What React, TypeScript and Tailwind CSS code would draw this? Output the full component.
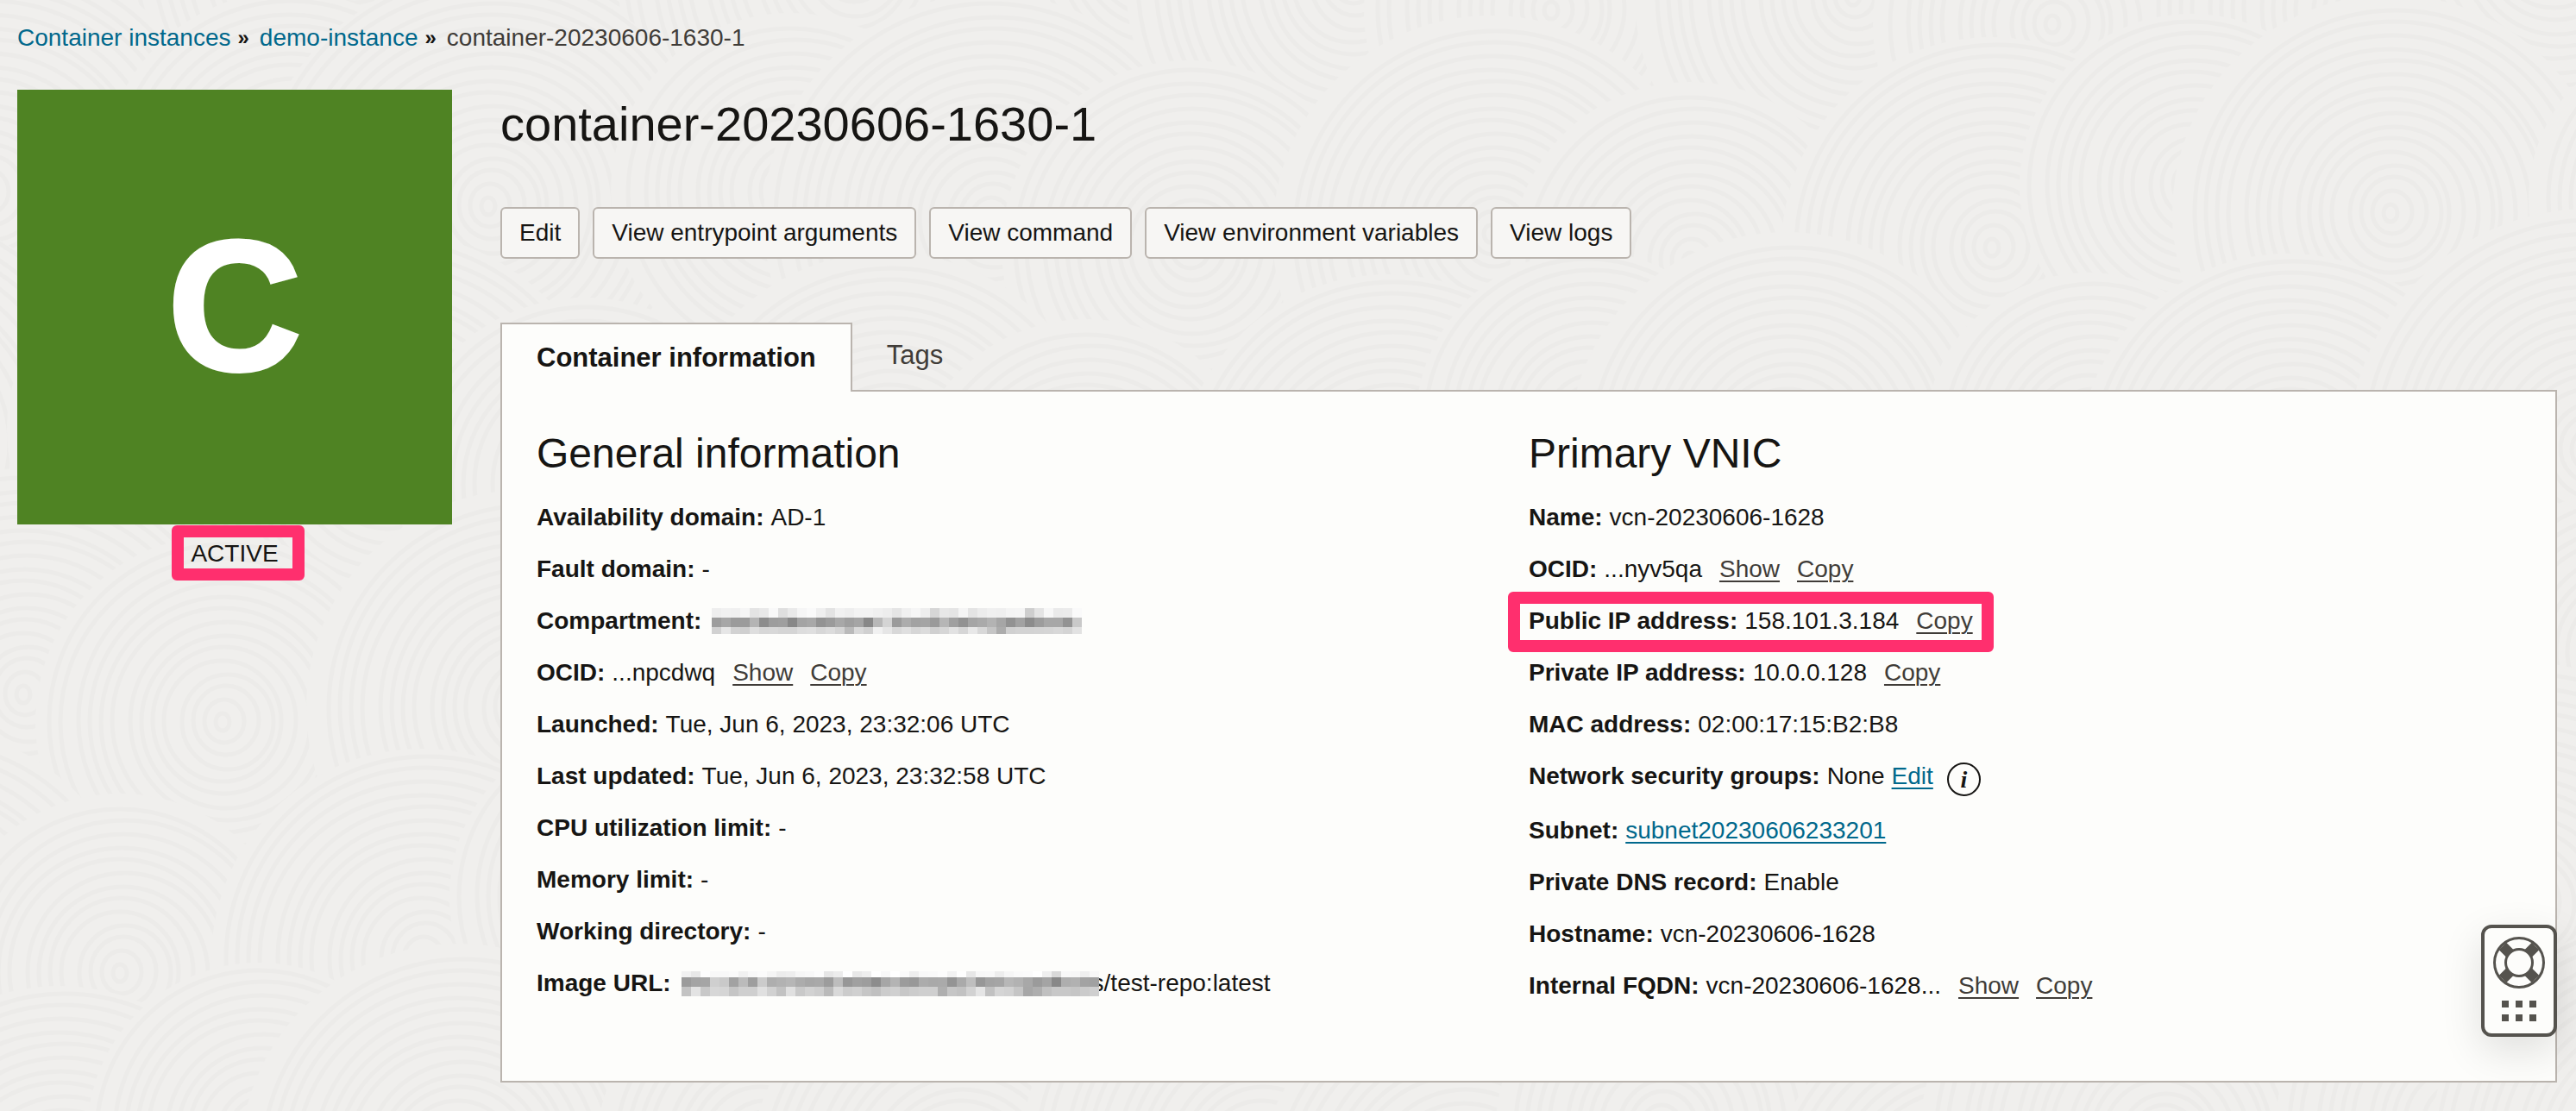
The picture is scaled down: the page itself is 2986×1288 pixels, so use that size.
import type { ReactNode } from "react";

const DISCS: [number, number, number][] = [];
for (let row = 0; row < 6; row++) {
  for (let col = 0; col < 12; col++) {
    const n = (row * 37 + col * 61) % 17;
    DISCS.push([
      -120 + col * 280 + (row % 2) * 140 + (n - 8) * 7,
      -20 + row * 275 + ((n * 5) % 13) * 8 - 48,
      190 + ((n * 7) % 11) * 9,
    ]);
  }
}

function Backdrop() {
  return (
    <svg
      aria-hidden="true"
      className="pointer-events-none absolute inset-0 -z-10 h-full w-full"
      viewBox="0 0 2986 1288"
      preserveAspectRatio="xMidYMid slice"
    >
      {DISCS.map(([x, y, r], i) => (
        <g key={i} fill="none" stroke="#ecebe9" strokeWidth="5">
          <circle cx={x} cy={y} r={r} fill="#f0efed" stroke="none" />
          {Array.from({ length: Math.floor(r / 15) }, (_, k) => (
            <ellipse key={k} cx={x + (k % 4) * 2} cy={y - (k % 3)} rx={8 + k * 15} ry={10 + k * 15} />
          ))}
        </g>
      ))}
    </svg>
  );
}

const COMPARTMENT_MASK = [
  "ee f1 f0 f6 e4 e9 f9 df ea f6 fa ef e3 f1 ee f3 f3 f0 ed e5 f0 f6 ee d6 e7 e5 f5 e4 ec f0 ef f4 f5 ce e4 f7 ea eb fa",
  "9d a7 9b 9b b4 8d 9d 9f 88 a4 a8 93 9b a8 9f a5 88 b8 d4 9b ac a2 a5 9a b6 a0 92 a5 aa b3 a6 92 a2 8c 9c a7 a7 93 c9",
  "d1 e6 d2 cf de d7 d8 d5 d5 dd df d7 dc d4 ba d9 d0 f1 e6 d8 df d6 dc d0 d6 e2 d6 e8 d8 c5 ac d0 d3 d3 d4 d5 d8 d4 e2",
];
const IMAGE_MASK = [
  "f1 e8 fd f8 f8 fa f1 f8 fb f5 ec ee f6 f8 fc e6 ec ff e8 ee ff f8 ff fa ee f8 f9 fc f2 fe e7 f7 f8 ed f6 fa fb ff ef d9 f8 f7 ef f8",
  "9b a4 a5 cf c9 a2 bb 9e cb ae b2 b6 ac a7 a9 9c bd 97 a0 9d 8d a6 b4 9c 98 ac a9 aa 94 aa be 97 a3 a5 b7 b2 a8 9b a4 88 ae b1 a3 a1",
  "c3 e3 c8 d7 d5 c5 cf cf e0 d1 c2 e0 c9 d2 cd ba d9 cc d0 c6 c0 cc d0 c7 cc cf cf af c6 c2 d2 e5 c1 d5 d2 c5 a7 ae c0 c8 c8 c5 cb cf",
];

function Redacted({ rows, label, heights }: { rows: string[]; label: string; heights: number[] }) {
  const columns = rows[0].split(" ").length;
  const total = heights[0] + heights[1] + heights[2];
  return (
    <svg
      role="img"
      aria-label={label}
      width={columns * 11}
      height={total}
      viewBox={`0 0 ${columns * 11} ${total}`}
      shapeRendering="crispEdges"
      className="shrink-0"
    >
      {rows.map((row, r) =>
        row
          .split(" ")
          .map((v, c) => (
            <rect
              key={`${r}-${c}`}
              x={c * 11}
              y={heights.slice(0, r).reduce((a, b) => a + b, 0)}
              width="11"
              height={heights[r]}
              fill={`#${v}${v}${v}`}
            />
          )),
      )}
    </svg>
  );
}

function Row({ label, children, marked }: { label: string; children: ReactNode; marked?: boolean }) {
  return (
    <div className="relative flex w-fit items-start gap-2 whitespace-nowrap">
      <dt className="font-bold">{label}:</dt>
      <dd className="flex items-start">{children}</dd>
      {marked && (
        <div className="pointer-events-none absolute -inset-x-6 -top-3.5 -bottom-4 rounded-md border-14 border-[#ff2f6e]" />
      )}
    </div>
  );
}

function Action({ children }: { children: ReactNode }) {
  return (
    <button type="button" className="ml-5 text-[#403c38] underline decoration-2 underline-offset-4">
      {children}
    </button>
  );
}

function ToolButton({ children }: { children: ReactNode }) {
  return (
    <button type="button" className="h-15 rounded-md border-2 border-[#bab4ae] bg-[#f7f6f4] px-5">
      {children}
    </button>
  );
}

function InfoIcon() {
  return (
    <button
      type="button"
      aria-label="About network security groups"
      className="mt-1 ml-4 flex size-[39px] items-center justify-center rounded-full border-2 border-[#161513] font-['Liberation_Serif',serif] text-[28px] leading-none font-bold italic"
    >
      i
    </button>
  );
}

function HelpWidget() {
  return (
    <button
      type="button"
      aria-label="Help"
      className="absolute -right-0.5 bottom-[51px] flex h-[130px] w-[88px] flex-col items-center rounded-xl border-4 border-[#55534e] bg-[#fdfdfb] pt-2.5 shadow-[0_16px_48px_rgba(0,0,0,0.12)]"
    >
      <svg width="60" height="60" viewBox="0 0 60 60" fill="none" stroke="#55534e">
        <circle cx="30" cy="30" r="28.500" strokeWidth="3" />
        <circle cx="30" cy="30" r="15.500" strokeWidth="3" />
        <path d="M19 19l-8-8M41 19l8-8M19 41l-8 8M41 41l8 8" strokeWidth="12" />
      </svg>
      <svg className="mt-3.5" width="40" height="24" viewBox="0 0 40 24" fill="#55534e" shapeRendering="crispEdges">
        {[0, 16, 32].map((x) => (
          <g key={x}>
            <rect x={x} y="0" width="8" height="8" />
            <rect x={x} y="16" width="8" height="8" />
          </g>
        ))}
      </svg>
    </button>
  );
}

export default function App() {
  return (
    <div className="relative isolate min-h-screen bg-[#f0efed] pt-6 pr-[22px] pb-8 pl-5 font-['Liberation_Sans',Arial,sans-serif] text-[28px] leading-10 text-[#161513]">
      <Backdrop />
      <nav aria-label="Breadcrumb" className="flex items-center">
        <a href="#instances" className="text-[#00688c]">Container instances</a>
        <span className="mr-3 ml-2 text-[24px] font-bold">»</span>
        <a href="#demo" className="text-[#00688c]">demo-instance</a>
        <span className="mr-3 ml-2 text-[24px] font-bold">»</span>
        <span className="text-[#403c38]">container-20230606-1630-1</span>
      </nav>

      <div className="mt-10 flex gap-14">
        <aside className="flex w-[504px] shrink-0 flex-col items-center">
          <div className="flex h-[504px] w-full items-center justify-center bg-[#4f8323] pb-1 text-[216px] font-bold text-white [-webkit-text-stroke:4px_white]">
            C
          </div>
          <div className="relative mt-3.5">
            ACTIVE
            <div className="pointer-events-none absolute -top-[13px] -right-[30px] -bottom-[11px] -left-[22px] rounded-md border-14 border-[#ff2f6e]" />
          </div>
        </aside>

        <main className="min-w-0 flex-1">
          <h1 className="mt-2 text-[56px] leading-16">container-20230606-1630-1</h1>
          <div className="mt-16 flex gap-[15px]">
            <ToolButton>Edit</ToolButton>
            <ToolButton>View entrypoint arguments</ToolButton>
            <ToolButton>View command</ToolButton>
            <ToolButton>View environment variables</ToolButton>
            <ToolButton>View logs</ToolButton>
          </div>

          <div role="tablist" className="relative z-10 mt-[74px] -mb-0.5 flex items-start text-[31px]">
            <button
              type="button"
              role="tab"
              aria-selected="true"
              className="h-20 border-2 border-b-0 border-[#bab4ae] bg-[#fdfdfb] px-10 font-bold"
            >
              Container information
            </button>
            <button type="button" role="tab" aria-selected="false" className="h-19 px-10 text-[#403c38]">
              Tags
            </button>
          </div>

          <div className="relative border-2 border-[#bab4ae] bg-[#fdfdfb] px-10 pt-10 pb-[90px]">
            <div className="grid grid-cols-2">
              <section>
                <h2 className="mb-[22px] text-[48px] leading-16">General information</h2>
                <dl className="flex flex-col gap-5">
                  <Row label="Availability domain">AD-1</Row>
                  <Row label="Fault domain">-</Row>
                  <Row label="Compartment">
                    <span className="ml-1 flex h-10 items-center">
                      <Redacted rows={COMPARTMENT_MASK} heights={[11, 11, 8]} label="Redacted compartment" />
                    </span>
                  </Row>
                  <Row label="OCID">
                    ...npcdwq
                    <Action>Show</Action>
                    <Action>Copy</Action>
                  </Row>
                  <Row label="Launched">Tue, Jun 6, 2023, 23:32:06 UTC</Row>
                  <Row label="Last updated">Tue, Jun 6, 2023, 23:32:58 UTC</Row>
                  <Row label="CPU utilization limit">-</Row>
                  <Row label="Memory limit">-</Row>
                  <Row label="Working directory">-</Row>
                  <Row label="Image URL">
                    <span className="relative z-10 ml-1 flex h-10 items-center">
                      <Redacted rows={IMAGE_MASK} heights={[7, 11, 11]} label="Redacted registry path" />
                    </span>
                    <span className="-ml-2">s/test-repo:latest</span>
                  </Row>
                </dl>
              </section>

              <section>
                <h2 className="mb-[22px] text-[48px] leading-16">Primary VNIC</h2>
                <dl className="flex flex-col gap-5">
                  <Row label="Name">vcn-20230606-1628</Row>
                  <Row label="OCID">
                    ...nyv5qa
                    <Action>Show</Action>
                    <Action>Copy</Action>
                  </Row>
                  <Row label="Public IP address" marked>
                    158.101.3.184
                    <Action>Copy</Action>
                  </Row>
                  <Row label="Private IP address">
                    10.0.0.128
                    <Action>Copy</Action>
                  </Row>
                  <Row label="MAC address">02:00:17:15:B2:B8</Row>
                  <Row label="Network security groups">
                    None
                    <a href="#groups" className="ml-2 text-[#00688c] underline decoration-2 underline-offset-4">
                      Edit
                    </a>
                    <InfoIcon />
                  </Row>
                  <Row label="Subnet">
                    <a href="#subnet" className="text-[#00688c] underline decoration-2 underline-offset-4">
                      subnet20230606233201
                    </a>
                  </Row>
                  <Row label="Private DNS record">Enable</Row>
                  <Row label="Hostname">vcn-20230606-1628</Row>
                  <Row label="Internal FQDN">
                    vcn-20230606-1628...
                    <Action>Show</Action>
                    <Action>Copy</Action>
                  </Row>
                </dl>
              </section>
            </div>
            <HelpWidget />
          </div>
        </main>
      </div>
    </div>
  );
}
